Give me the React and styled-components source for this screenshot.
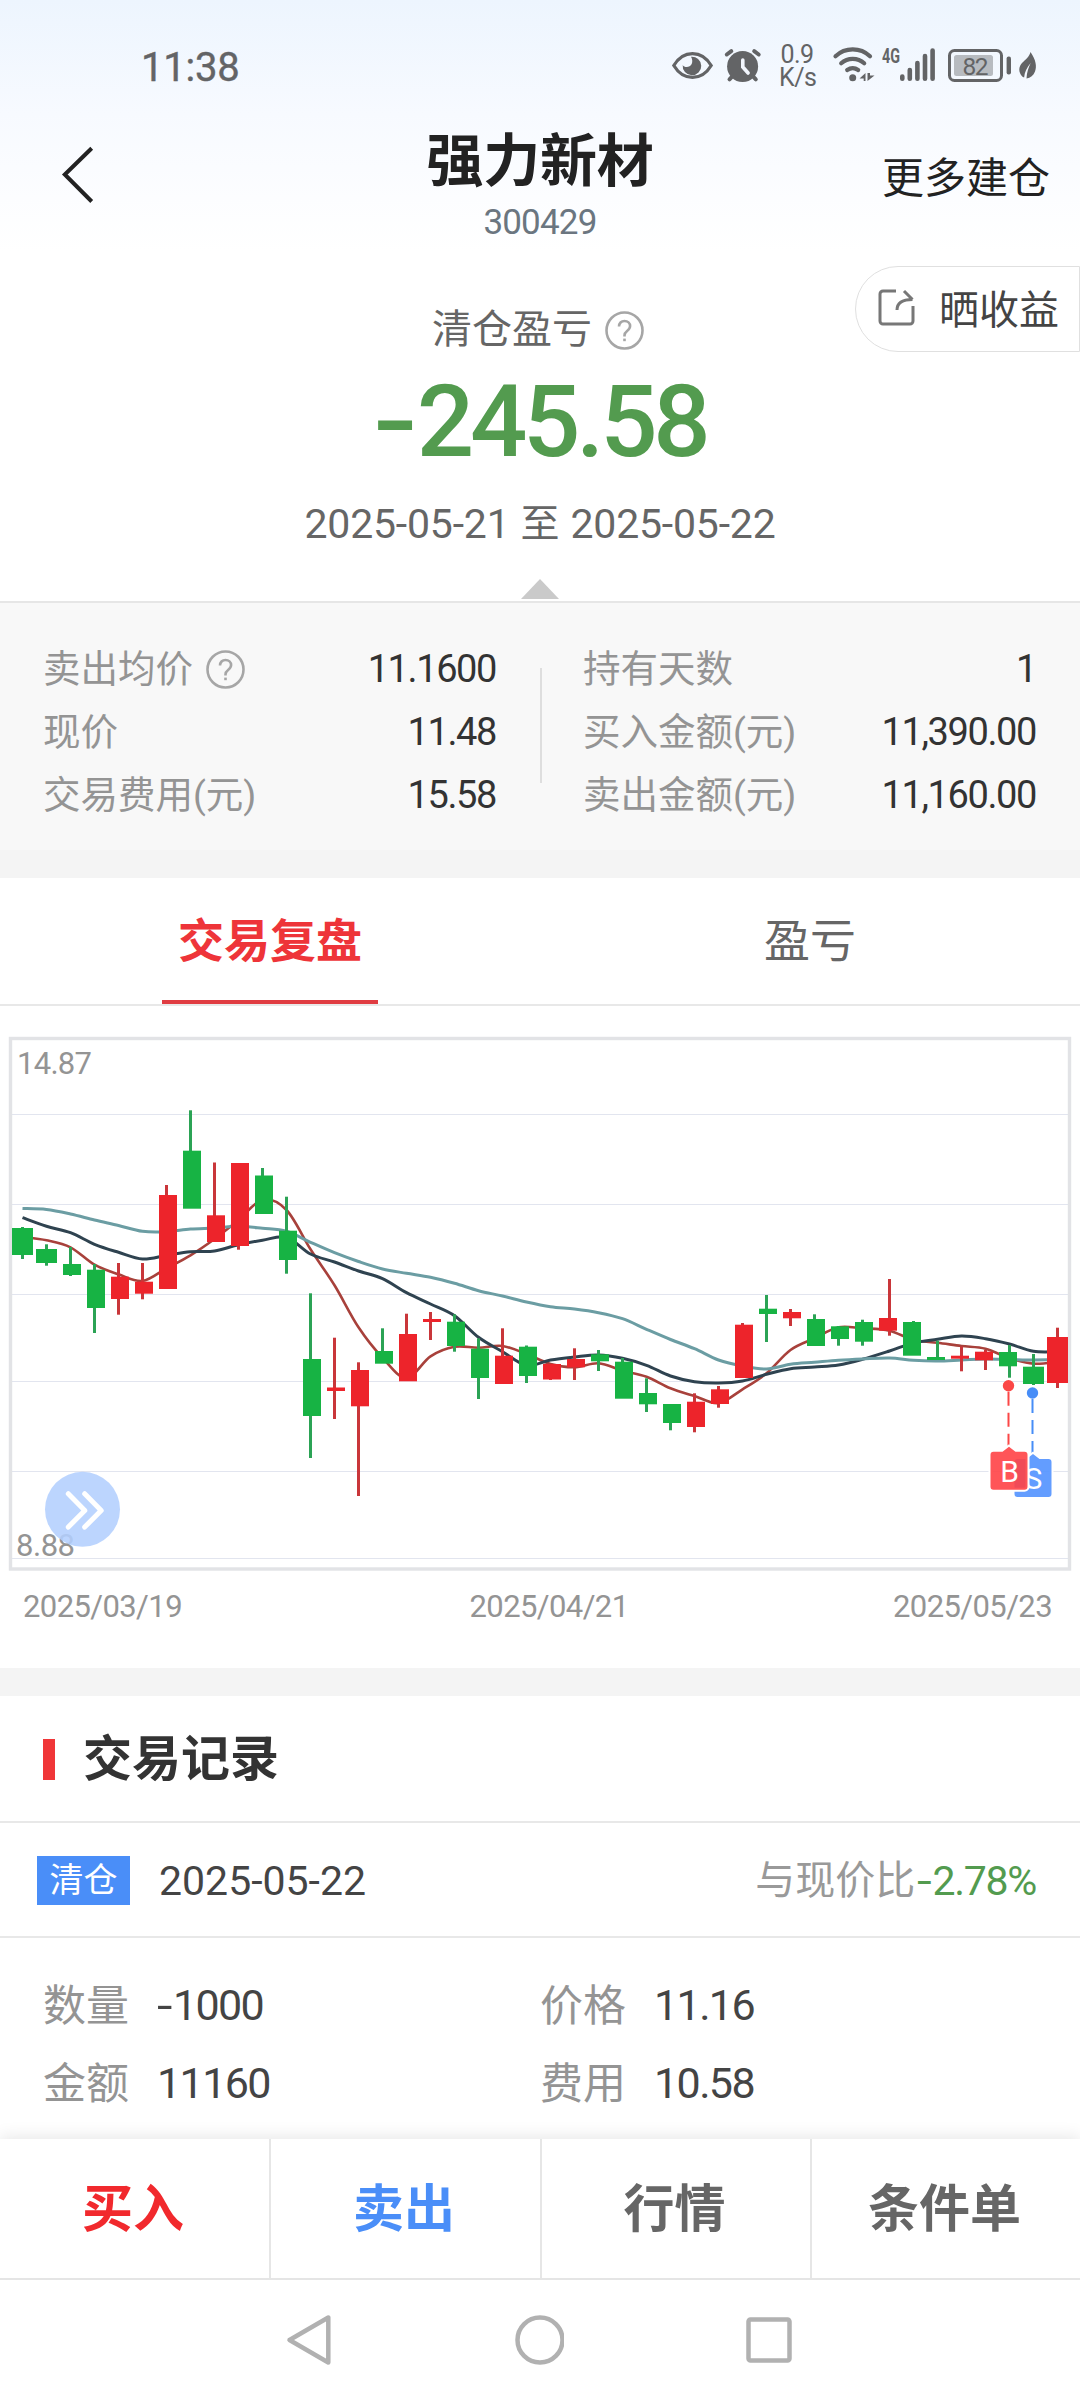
import styled, { createGlobalStyle } from "styled-components";

const GlobalStyle = createGlobalStyle`
  * {
    box-sizing: border-box;
  }
  body {
    margin: 0;
    background: #fff;
    font-family: Roboto, "Noto Sans CJK SC", sans-serif;
  }
  p, h1, h2 {
    margin: 0;
  }
  svg {
    display: block;
  }
`;

const Page = styled.div`
  width: 1080px;
  height: 2400px;
  overflow: hidden;
  display: flex;
  flex-direction: column;
  background: #fff;
`;

const TopArea = styled.div`
  height: 252px;
  background: linear-gradient(#edf5fe, #f7faff 45%, #fff);
`;

const StatusBar = styled.div`
  height: 104px;
  padding: 0 44px 0 141px;
  display: flex;
  justify-content: space-between;
  align-items: flex-start;
  color: #636466;
`;

const Clock = styled.span`
  margin-top: 44px;
  font-size: 40px;
  line-height: 48px;
  letter-spacing: -0.2px;
  -webkit-text-stroke: 0.4px #636466;
`;

const StatusIcons = styled.div`
  display: flex;
  margin-top: 40px;
  height: 52px;
`;

const StatusIcon = styled.svg`
  width: ${(props) => props.$w}px;
  height: 52px;
  margin-left: ${(props) => props.$gap || 0}px;
  overflow: visible;
`;

const Speed = styled.div`
  width: 36px;
  margin: 3px 2px 0 18px;
  font-size: 25px;
  line-height: 23px;
  letter-spacing: -0.5px;
  text-align: center;
  white-space: nowrap;
`;

const Header = styled.header`
  height: 148px;
  display: grid;
  grid-template-columns: 300px 1fr 300px;
`;

const BackButton = styled.button`
  width: 110px;
  height: 140px;
  padding: 40px 0 0 60px;
  display: flex;
  align-items: flex-start;
  border: none;
  background: none;
`;

const TitleBlock = styled.div`
  display: flex;
  flex-direction: column;
  align-items: center;
  padding-top: 24px;
`;

const StockName = styled.h1`
  font-size: 57px;
  line-height: 68px;
  font-weight: 700;
  color: #222;
  letter-spacing: -0.3px;
`;

const StockCode = styled.p`
  margin-top: 7px;
  font-size: 35px;
  line-height: 40px;
  letter-spacing: -0.8px;
  color: #6b7680;
`;

const MoreLink = styled.span`
  justify-self: end;
  padding: 45px 30px 0 0;
  font-size: 42px;
  line-height: 60px;
  color: #222;
`;

const Summary = styled.section`
  position: relative;
  height: 351px;
  padding-top: 48px;
  display: flex;
  flex-direction: column;
  align-items: center;
  border-bottom: 2px solid #e6e6e6;
`;

const SummaryLabel = styled.div`
  display: flex;
  align-items: center;
  gap: 13px;
  height: 60px;
  margin-right: 4px;
  font-size: 40px;
  line-height: 60px;
  color: #666;
`;

const Profit = styled.p`
  margin-top: 2px;
  height: 120px;
  font-size: 101px;
  line-height: 120px;
  font-weight: 500;
  letter-spacing: -4.2px;
  color: #539b4f;
`;

// leading minus sign, wider than the font's own hyphen
const Sign = styled.span`
  display: inline-block;
  margin-right: 0.13em;
  transform: scaleX(1.3);
  transform-origin: left;
`;

const Period = styled.p`
  display: flex;
  gap: 11px;
  margin-top: 12px;
  font-size: 41px;
  line-height: 60px;
  color: #666;
`;

const PeriodDate = styled.span`
  letter-spacing: -0.2px;
`;

const PeriodWord = styled.span`
  font-size: 39px;
`;

const FoldArrow = styled.span`
  margin-top: 25px;
  border-left: 19px solid transparent;
  border-right: 19px solid transparent;
  border-bottom: 20px solid #cacaca;
`;

const ShareButton = styled.button`
  position: absolute;
  top: 14px;
  right: 0;
  width: 225px;
  height: 86px;
  padding: 3px 20px 0 22px;
  display: flex;
  align-items: center;
  justify-content: space-between;
  border: 1.5px solid #e0e0e0;
  border-radius: 43px 0 0 43px;
  background: #fff;
  font-family: inherit;
  font-size: 40px;
  line-height: 60px;
  color: #444;

  svg {
    margin-bottom: 7px;
  }
`;

const StatsPanel = styled.section`
  height: 247px;
  padding: 35px 44px 0 43px;
  display: grid;
  grid-template-columns: 453px 46px 1fr;
  background: #f8f8f8;
`;

const StatsColumn = styled.div`
  display: flex;
  flex-direction: column;
`;

const StatsDivider = styled.div`
  width: 2px;
  height: 115px;
  margin-top: 30px;
  justify-self: end;
  background: #dedede;
`;

const StatRow = styled.div`
  height: 63px;
  padding-left: ${(props) => props.$indent || 0}px;
  display: flex;
  justify-content: space-between;
  align-items: center;
  line-height: 63px;
`;

const StatLabel = styled.span`
  display: flex;
  align-items: center;
  gap: 13px;
  font-size: 37.5px;
  color: #949494;
`;

const StatValue = styled.span`
  font-size: 38px;
  letter-spacing: -1.4px;
  color: #333;
`;

const Band = styled.div`
  height: 28px;
  background: #f4f4f4;
`;

const Tabs = styled.nav`
  height: 128px;
  display: flex;
  border-bottom: 2px solid #e8e8e8;
`;

const Tab = styled.button`
  flex: 1;
  height: 126px;
  padding: 0;
  display: flex;
  flex-direction: column;
  align-items: center;
  justify-content: space-between;
  border: none;
  background: none;
  font-family: inherit;
  font-size: 46px;
  line-height: 126px;
  font-weight: ${(props) => (props.$active ? 700 : 400)};
  color: ${(props) => (props.$active ? "#ee3439" : "#666")};

  &::after {
    content: "";
    flex: none;
    width: 216px;
    height: 4px;
    margin-top: -4px;
    background: ${(props) => (props.$active ? "#e03c42" : "transparent")};
  }
`;

const ChartSection = styled.section`
  height: 662px;
  padding-top: 30px;
`;

const ChartDates = styled.div`
  display: flex;
  justify-content: space-between;
  margin-top: 11px;
  padding: 0 28px 0 23px;
  font-size: 31px;
  line-height: 48px;
  letter-spacing: -0.6px;
  color: #949494;
`;

const ChartDate = styled.span`
  margin-left: ${(props) => props.$shift || 0}px;
`;

const SectionTitle = styled.div`
  height: 127px;
  padding: 2px 0 0 43px;
  display: flex;
  align-items: center;
  gap: 28px;
  border-bottom: 2px solid #e8e8e8;

  &::before {
    content: "";
    width: 12px;
    height: 41px;
    background: #f03638;
  }
`;

const SectionName = styled.h2`
  font-size: 49px;
  line-height: 60px;
  font-weight: 700;
  color: #333;
`;

const RecordHead = styled.div`
  height: 115px;
  padding: 2px 44px 0 37px;
  display: flex;
  align-items: center;
  line-height: 60px;
  border-bottom: 2px solid #e8e8e8;
`;

const Tag = styled.span`
  width: 93px;
  height: 49px;
  text-align: center;
  font-size: 34px;
  line-height: 49px;
  color: #fff;
  background: #4a8ef8;
`;

const RecordDate = styled.span`
  margin-left: 29px;
  font-size: 41px;
  color: #444;
`;

const Compare = styled.span`
  margin-left: auto;
  display: flex;
  align-items: center;
  font-size: 40px;
  color: #999;
`;

const Change = styled.span`
  margin-left: 2px;
  font-size: 41px;
  letter-spacing: -1.3px;
  color: #539b4f;
`;

const RecordGrid = styled.div`
  flex: 1;
  padding: 29px 44px 0 43px;
  display: grid;
  grid-template-columns: 497px 1fr;
  grid-auto-rows: 78px;
`;

const RecordCell = styled.div`
  display: flex;
  align-items: center;
  height: 78px;
  line-height: 60px;
`;

const RecordLabel = styled.span`
  width: 114px;
  font-size: 43px;
  color: #949494;
`;

const RecordValue = styled.span`
  margin-top: -2px;
  font-size: 43px;
  letter-spacing: -1.6px;
  color: #444;
`;

const ActionBar = styled.div`
  height: 141px;
  display: grid;
  grid-template-columns: 269px 271px 270px 270px;
  border-bottom: 2px solid #e5e5e5;
  background: #fff;
  box-shadow: 0 -2px 16px rgba(0, 0, 0, 0.1);
`;

const Action = styled.button`
  padding: 2px 3px 0 0;
  border: none;
  border-left: 2px solid #e6e6e6;
  background: none;
  font-family: inherit;
  font-size: 51px;
  line-height: 60px;
  font-weight: 700;
  color: ${(props) => props.$color};

  &:first-child {
    border-left: none;
  }
`;

const SystemNav = styled.div`
  height: 120px;
  padding: 0 288px 0 286px;
  display: flex;
  justify-content: space-between;
  align-items: center;
  background: #fff;
`;

const RED = "#ed242b";
const GREEN = "#17b344";

// [body top, body bottom, wick top, wick bottom, rising]
const candles = [
  [1228, 1255, 1227, 1259, 0],
  [1249, 1263, 1244.3, 1265.7, 0],
  [1264, 1275, 1247, 1276, 0],
  [1269.7, 1308, 1264, 1333, 0],
  [1276.7, 1299, 1263, 1314.7, 1],
  [1281.7, 1293.7, 1263, 1299.3, 1],
  [1195, 1289, 1185, 1289, 1],
  [1150.7, 1208.7, 1110.3, 1208, 0],
  [1215.3, 1242, 1162.5, 1242, 1],
  [1163, 1246, 1163, 1249.7, 1],
  [1175.5, 1214, 1168, 1214, 0],
  [1230.7, 1260, 1196.7, 1273.7, 0],
  [1359, 1416, 1293.3, 1458, 0],
  [1387.5, 1391, 1337.7, 1419, 1],
  [1370, 1406.3, 1362.3, 1496, 1],
  [1351, 1363.7, 1328.3, 1363, 0],
  [1334, 1381.3, 1313.7, 1381, 1],
  [1319, 1322, 1312, 1340, 1],
  [1321.7, 1346, 1314.3, 1351.7, 0],
  [1348.7, 1378, 1338.3, 1399, 0],
  [1355.7, 1384, 1328.3, 1384, 1],
  [1346.7, 1376, 1345.5, 1383, 0],
  [1364, 1379.5, 1364, 1380, 1],
  [1359, 1367.3, 1348.3, 1380, 1],
  [1354.3, 1361.3, 1350, 1371, 0],
  [1361.7, 1398.7, 1358, 1398, 0],
  [1393, 1404.3, 1378.3, 1412, 0],
  [1404, 1423, 1404, 1430.3, 0],
  [1401.7, 1427, 1393.3, 1432.3, 1],
  [1389.3, 1404, 1386, 1407.7, 1],
  [1324.7, 1378, 1323, 1378, 1],
  [1308.7, 1314, 1295, 1342, 0],
  [1312, 1318.3, 1309, 1326, 1],
  [1319, 1346, 1314.3, 1346, 0],
  [1326.3, 1339, 1326, 1345.7, 0],
  [1322, 1341.7, 1319.7, 1345.7, 0],
  [1318, 1330.7, 1279, 1335.7, 1],
  [1322, 1355.7, 1321, 1355, 0],
  [1357, 1360, 1340.7, 1360, 0],
  [1355.7, 1358.7, 1346.3, 1371.3, 1],
  [1351.7, 1360.3, 1350, 1370, 1],
  [1352, 1366.3, 1345, 1377.7, 0],
  [1366.7, 1384, 1354, 1385, 0],
  [1337, 1383, 1327.7, 1388, 1],
];

const slowLine = [
  1208.5, 1209.5, 1214, 1220, 1225.5, 1231.3, 1231.7, 1229, 1228, 1226.3, 1228.3,
  1231.3, 1242.3, 1252.7, 1261.5, 1269, 1273.3, 1277.3, 1283.3, 1290.7, 1296, 1302,
  1306.7, 1309, 1312.7, 1318.7, 1329.3, 1339.5, 1348.7, 1360, 1366, 1369, 1364.3,
  1362.3, 1360.3, 1359, 1358, 1360.3, 1361, 1360, 1359, 1359.5, 1360, 1359.5,
];

const midLine = [
  1217.7, 1226.3, 1232.7, 1244.3, 1252.3, 1259, 1255.3, 1251.7, 1251, 1244.7, 1240.3,
  1237.3, 1254, 1262, 1271, 1278.7, 1292.7, 1304, 1315.7, 1337.3, 1351.7, 1365.3,
  1360, 1357, 1355, 1358.3, 1365.3, 1376, 1381.7, 1383, 1381, 1374.3, 1368.7, 1367,
  1365, 1359.3, 1351, 1343, 1339.3, 1336, 1338.7, 1344, 1351.3, 1351.7,
];

const fastLine = [
  1237, 1240.3, 1247.3, 1264.7, 1274.3, 1281, 1268.3, 1255.3, 1239, 1220, 1199.7,
  1210, 1249.3, 1285.3, 1327.3, 1357.7, 1378, 1356.3, 1346.7, 1347.7, 1346, 1354,
  1364, 1367.3, 1363.3, 1370.7, 1376.7, 1388.3, 1396, 1403, 1389.3, 1373.3, 1350,
  1338.3, 1327.3, 1328.3, 1330.7, 1340, 1342.7, 1346, 1348.7, 1358.3, 1363.7, 1362,
];

const gridLines = [1114.5, 1204.5, 1294.5, 1381.5, 1471.5, 1558.5];

const wickX = (i) => 22.5 + 24 * i + (i > 35 ? 3 : 0);

// smooth curve through one value for each candle
const curve = (values) => {
  const pts = values.map((y, i) => [wickX(i), y]);
  let d = `M${pts[0][0]} ${pts[0][1]}`;
  for (let i = 0; i < pts.length - 1; i++) {
    const p0 = pts[i - 1] || pts[i];
    const p1 = pts[i];
    const p2 = pts[i + 1];
    const p3 = pts[i + 2] || p2;
    d += `C${p1[0] + (p2[0] - p0[0]) / 6} ${p1[1] + (p2[1] - p0[1]) / 6} ${
      p2[0] - (p3[0] - p1[0]) / 6
    } ${p2[1] - (p3[1] - p1[1]) / 6} ${p2[0]} ${p2[1]}`;
  }
  return d;
};

const Candle = ({ index, data }) => {
  const [top, bottom, high, low, rising] = data;
  const edge = index < 2 || index > 41;
  const left = 15 + 24 * index - (index < 2 ? 3 : 0);
  return (
    <g>
      <rect
        x={wickX(index) - 1.5}
        y={high}
        width={3}
        height={low - high}
        fill={rising ? "#c9363a" : "#2ba355"}
      />
      <rect
        x={left}
        y={top}
        width={edge ? 21 : 18}
        height={bottom - top}
        fill={rising ? RED : GREEN}
      />
    </g>
  );
};

const TradeMark = ({ x, y, letter, color, box }) => (
  <g>
    <line
      x1={x}
      x2={x}
      y1={y + 6}
      y2={y + 62}
      stroke={color}
      strokeWidth="2"
      strokeDasharray="14 7"
    />
    <circle cx={x} cy={y} r="5.7" fill={color} />
    <path
      d={`M${x - 15} ${y + 66}h9l6.5 -5 6.5 5h9a3 3 0 0 1 3 3v32a3 3 0 0 1 -3 3h-31a3 3 0 0 1 -3 -3v-32a3 3 0 0 1 3 -3z`}
      fill={box}
      stroke="#fff"
      strokeWidth="4"
      paintOrder="stroke"
    />
    <text x={x + 1} y={y + 96} fontSize="30" fill="#fff" textAnchor="middle">
      {letter}
    </text>
  </g>
);

const Chart = () => (
  <svg width="1080" height="536" viewBox="0 1036 1080 536">
    {gridLines.map((y) => (
      <line key={y} x1="12" x2="1068" y1={y} y2={y} stroke="#e2e5ef" />
    ))}
    <rect x="10.5" y="1038.5" width="1059" height="530.5" fill="none" stroke="#e2e3e6" strokeWidth="3.4" />
    <g fill="none" strokeWidth="3">
      <path d={curve(fastLine)} stroke="#a8413b" strokeWidth="2.6" />
      <path d={curve(midLine)} stroke="#2f4350" />
      <path d={curve(slowLine)} stroke="#6b9da3" />
    </g>
    {candles.map((c, i) => (
      <Candle key={i} index={i} data={c} />
    ))}
    <TradeMark x={1032.5} y={1393} letter="S" color="#478df7" box="rgba(82,146,255,0.9)" />
    <TradeMark x={1008.5} y={1385.7} letter="B" color="#fb4746" box="rgba(255,66,70,0.9)" />
    <g fontSize="31" fill="#949494">
      <text x="17" y="1074" textLength="75">
        14.87
      </text>
      <text x="16" y="1556" textLength="59">
        8.88
      </text>
    </g>
    <circle cx="82.5" cy="1509.3" r="37.5" fill="rgba(179,207,254,0.88)" />
    <path
      d="M68.3 1493.7l16.5 16.7-16.5 16.7M84.7 1493.7l16.5 16.7-16.5 16.7"
      fill="none"
      stroke="#fff"
      strokeWidth="5"
      strokeLinecap="round"
      strokeLinejoin="round"
    />
  </svg>
);

const HelpIcon = ({ size = 39 }) => (
  <svg width={size} height={size} viewBox="0 0 39 39" fill="none" stroke="#a6a6a6" strokeWidth="2.6">
    <circle cx="19.5" cy="19.5" r="18" />
    <path d="M14 15.6c0-3.4 2.3-5.6 5.5-5.6s5.6 2.1 5.6 5.1c0 2.3-1.3 3.6-3 4.9-1.7 1.3-2.6 2.2-2.6 4.4v1" />
    <path d="M19.5 27.6v2.6" />
  </svg>
);

const ShareIcon = () => (
  <svg width="37" height="37" viewBox="0 0 37 37" fill="none" stroke="#777" strokeWidth="3">
    <path d="M18 2H5a3 3 0 0 0-3 3v27a3 3 0 0 0 3 3h27a3 3 0 0 0 3-3V17" strokeLinejoin="round" />
    <path d="M19 21c0-6.5 4-10.5 15.5-10.5M26 2l8.5 8.5" />
  </svg>
);

const StatusGroup = () => (
  <StatusIcons>
    <StatusIcon $w={41} viewBox="672 40 41 52">
      <path
        d="M673.8 65.5C678 58.5 685 53.6 692.5 53.6S707 58.5 711.2 65.5C707 72.5 700 77.4 692.5 77.4S678 72.5 673.8 65.5Z"
        fill="none"
        stroke="#636466"
        strokeWidth="3.2"
      />
      <path d="M691 56.7a9.3 9.3 0 1 1-8.3 8.3c1.6 3 7.3 2.8 9-.9 1-2.4.7-4.9-.7-7.4z" fill="#636466" />
    </StatusIcon>
    <StatusIcon $w={36} $gap={12} viewBox="725 40 36 52">
      <g stroke="#636466" strokeWidth="4" strokeLinecap="round" fill="none">
        <path d="M726.8 54.5l4.5-3.3M758.7 54.5l-4.5-3.3M729.5 79.3l3-3.2M755.8 79.3l-3-3.2" />
      </g>
      <circle cx="742.6" cy="66.5" r="15.5" fill="#636466" />
      <path d="M742.8 60v7l5.3 6" stroke="#f2f6fd" strokeWidth="3.6" strokeLinecap="round" fill="none" />
    </StatusIcon>
    <Speed>
      0.9
      <br />
      K/s
    </Speed>
    <StatusIcon $w={41} $gap={16} viewBox="833 40 41 52">
      <g fill="none" stroke="#636466" strokeWidth="4.2" strokeLinecap="round">
        <path d="M835.5 56.2a25 25 0 0 1 34.5 0M841.2 63.3a17 17 0 0 1 23 0M847.2 70a9.5 9.5 0 0 1 11 0" />
      </g>
      <circle cx="852.7" cy="77.7" r="3.5" fill="#636466" />
      <path d="M859.5 78.5l6-5.5v8h-1.8v-2.5zM867.5 73v8l7-5.5h-4.5V73z" fill="#636466" />
    </StatusIcon>
    <StatusIcon $w={53} $gap={8} viewBox="882 40 53 52" fill="#636466">
      <text x="882" y="63" fontSize="20.5" fontWeight="700" textLength="18" lengthAdjust="spacingAndGlyphs">
        4G
      </text>
      <g stroke="#636466" strokeWidth="4.6" strokeLinecap="round">
        <path d="M902.3 76.5v2.2M909.8 70v8.7M917.4 63v15.7M925 56v22.7M932.6 50.5v28.2" />
      </g>
    </StatusIcon>
    <StatusIcon $w={63} $gap={13} viewBox="948 40 63 52">
      <rect x="949.5" y="50.5" width="52" height="30" rx="5" fill="none" stroke="#636466" strokeWidth="3" />
      <rect x="954" y="55" width="39" height="21" rx="2.5" fill="#b7bbc0" />
      <rect x="1006.6" y="56.5" width="4.4" height="18" rx="2" fill="#636466" />
      <text x="975.5" y="75" fontSize="24.5" textAnchor="middle" textLength="26" fill="#636466">
        82
      </text>
    </StatusIcon>
    <StatusIcon $w={17} $gap={8} viewBox="1019 40 17 52">
      <path
        d="M1030.5 52c5.5 8 6.5 14.5 4.5 19.5-1.5 4-4.5 6.5-8.5 7 .2-6 2-11 4.2-15.5-4 4.5-6 9-6.6 14.5l-1.6-.8C1018 72 1018.5 66.5 1022.5 62.5c3-3 6.8-5.5 8-10.5z"
        fill="#636466"
      />
    </StatusIcon>
  </StatusIcons>
);

// puts a leading minus into its own Sign
const SignedNumber = ({ value }) =>
  value.startsWith("-") ? (
    <>
      <Sign>-</Sign>
      {value.slice(1)}
    </>
  ) : (
    value
  );

const leftStats = [
  { label: "卖出均价", value: "11.1600", help: true },
  { label: "现价", value: "11.48" },
  { label: "交易费用(元)", value: "15.58" },
];

const rightStats = [
  { label: "持有天数", value: "1" },
  { label: "买入金额(元)", value: "11,390.00" },
  { label: "卖出金额(元)", value: "11,160.00" },
];

const record = [
  { label: "数量", value: "-1000" },
  { label: "价格", value: "11.16" },
  { label: "金额", value: "11160" },
  { label: "费用", value: "10.58" },
];

const actions = [
  { name: "买入", color: "#f1292d" },
  { name: "卖出", color: "#4a8ef8" },
  { name: "行情", color: "#666" },
  { name: "条件单", color: "#666" },
];

const App = () => {
  return (
    <Page>
      <GlobalStyle />
      <TopArea>
        <StatusBar>
          <Clock>11:38</Clock>
          <StatusGroup />
        </StatusBar>
        <Header>
          <BackButton>
            <svg width="34" height="60" viewBox="60 144 34 60" fill="none" stroke="#222" strokeWidth="4">
              <path d="M91.7 148.3L64.8 174.5l26.9 27" />
            </svg>
          </BackButton>
          <TitleBlock>
            <StockName>强力新材</StockName>
            <StockCode>300429</StockCode>
          </TitleBlock>
          <MoreLink>更多建仓</MoreLink>
        </Header>
      </TopArea>

      <Summary>
        <ShareButton>
          <ShareIcon />
          晒收益
        </ShareButton>
        <SummaryLabel>
          清仓盈亏
          <HelpIcon />
        </SummaryLabel>
        <Profit>
          <SignedNumber value="-245.58" />
        </Profit>
        <Period>
          <PeriodDate>2025-05-21</PeriodDate>
          <PeriodWord>至</PeriodWord>
          <PeriodDate>2025-05-22</PeriodDate>
        </Period>
        <FoldArrow />
      </Summary>

      <StatsPanel>
        <StatsColumn>
          {leftStats.map((s) => (
            <StatRow key={s.label}>
              <StatLabel>
                {s.label}
                {s.help && <HelpIcon />}
              </StatLabel>
              <StatValue>{s.value}</StatValue>
            </StatRow>
          ))}
        </StatsColumn>
        <StatsDivider />
        <StatsColumn>
          {rightStats.map((s) => (
            <StatRow key={s.label} $indent={41}>
              <StatLabel>{s.label}</StatLabel>
              <StatValue>{s.value}</StatValue>
            </StatRow>
          ))}
        </StatsColumn>
      </StatsPanel>
      <Band />

      <Tabs>
        <Tab $active>交易复盘</Tab>
        <Tab>盈亏</Tab>
      </Tabs>
      <ChartSection>
        <Chart />
        <ChartDates>
          <ChartDate>2025/03/19</ChartDate>
          <ChartDate $shift={23}>2025/04/21</ChartDate>
          <ChartDate>2025/05/23</ChartDate>
        </ChartDates>
      </ChartSection>
      <Band />

      <SectionTitle>
        <SectionName>交易记录</SectionName>
      </SectionTitle>
      <RecordHead>
        <Tag>清仓</Tag>
        <RecordDate>2025-05-22</RecordDate>
        <Compare>
          与现价比
          <Change>
            <SignedNumber value="-2.78%" />
          </Change>
        </Compare>
      </RecordHead>
      <RecordGrid>
        {record.map((r) => (
          <RecordCell key={r.label}>
            <RecordLabel>{r.label}</RecordLabel>
            <RecordValue>
              <SignedNumber value={r.value} />
            </RecordValue>
          </RecordCell>
        ))}
      </RecordGrid>

      <ActionBar>
        {actions.map((a) => (
          <Action key={a.name} $color={a.color}>
            {a.name}
          </Action>
        ))}
      </ActionBar>
      <SystemNav>
        <svg width="46" height="54" viewBox="0 0 46 54" fill="none" stroke="#b1b1b1" strokeWidth="4.5">
          <path d="M42.3 4.5v45L3.5 27z" strokeLinejoin="round" />
        </svg>
        <svg width="50" height="50" viewBox="-1 0 50 50" fill="none" stroke="#b1b1b1" strokeWidth="4.5">
          <circle cx="25" cy="25" r="22.5" />
        </svg>
        <svg width="46" height="46" viewBox="0 0 46 46" fill="none" stroke="#b1b1b1" strokeWidth="4.5">
          <rect x="2.5" y="2.5" width="41" height="41" rx="2" />
        </svg>
      </SystemNav>
    </Page>
  );
};

export default App;
